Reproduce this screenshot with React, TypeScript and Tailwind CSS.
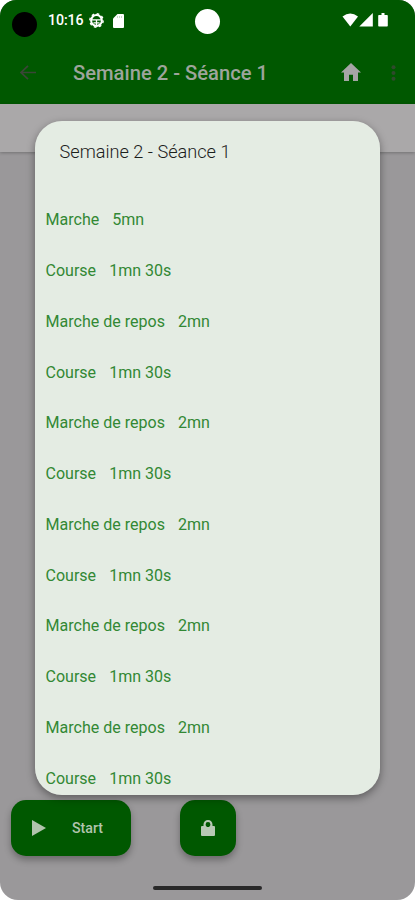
import React from "react";

type Step = { label: string; time: string };

const run: Step = { label: "Course", time: "1mn 30s" };
const rest: Step = { label: "Marche de repos", time: "2mn" };
const steps: Step[] = [
  { label: "Marche", time: "5mn" },
  run, rest, run, rest, run, rest, run, rest, run, rest, run,
];

function StatusBar() {
  return (
    <div className="relative flex h-[41px] items-center text-white">
      <span className="ml-3 mt-[7px] size-[25px] rounded-full bg-black" />
      <span className="ml-[11px] mt-px w-[36px] whitespace-nowrap text-[14.2px] font-medium tracking-[-0.1px]">10:16</span>
      <svg className="ml-[5px] size-[15px]" viewBox="0 0 15 15" fill="none" stroke="white">
        <circle cx="7.5" cy="7.5" r="5.4" strokeWidth="2" />
        <circle cx="7.5" cy="7.5" r="6.7" strokeWidth="1.4" strokeDasharray="2.63 2.63" />
        <path d="M2.500 6.800h10M7.500 7v5M4.500 9.800h6" strokeWidth="1.3" />
      </svg>
      <svg className="ml-[9px] h-[14px] w-[11px]" viewBox="0 0 11 14">
        <path d="M4.500 0H10q1 0 1 1v12q0 1-1 1H1q-1 0-1-1V4.500z" fill="white" />
        <path d="M4.500 2v2M6.500 2v2M8.500 2v2" stroke="#b9cfb9" strokeWidth=".8" />
      </svg>
      <span className="absolute left-[195px] top-[9px] size-[25px] rounded-full bg-white" />
      <svg className="absolute left-[342px] top-[13px] h-[14px] w-[46px]" viewBox="0 0 46 14" fill="white">
        <path d="M.5 3.500Q8.300-2.500 16 3.500L8.300 13.500z" />
        <path d="M30.800 0v13.500H17.300z" />
        <path d="M37 2h2.500V0h3v2H45q.8 0 .8.800v10q0 .8-.8.800h-8q-.8 0-.8-.8v-10q0-.8.800-.8z" />
      </svg>
    </div>
  );
}

function AppBar() {
  return (
    <div className="flex h-[63px] items-center">
      <svg className="ml-5 h-[15px] w-4" viewBox="0 0 16 16" preserveAspectRatio="none" fill="none" stroke="#3a4637" strokeWidth="1.800">
        <path d="M16 8H1.500M8 1L1 8l7 7" />
      </svg>
      <span className="ml-[37px] mt-[2px] w-[195px] whitespace-nowrap text-[20.200px] font-medium text-[#9da59b]">
        Semaine 2 - Séance 1
      </span>
      <svg className="ml-[73px] mt-[-1px] h-[18px] w-[20px]" viewBox="2 3 20 17" fill="#a5a5a5" preserveAspectRatio="none">
        <path d="M10 20v-6h4v6h5v-8h3L12 3 2 12h3v8z" />
      </svg>
      <svg className="ml-[29.500px] h-4 w-[5px]" viewBox="0 0 5 16" fill="#2f4a2c">
        <circle cx="2.500" cy="2.200" r="2" />
        <circle cx="2.500" cy="8" r="2" />
        <circle cx="2.500" cy="13.800" r="2" />
      </svg>
    </div>
  );
}

export default function App() {
  return (
    <div className="h-[900px] w-[415px] bg-white font-['Roboto',sans-serif]">
      <div className="relative flex h-full flex-col overflow-hidden rounded-t-[16px] rounded-b-[18px] bg-[#9a989a]">
        <header className="h-[104px] shrink-0 bg-[#005800]">
          <StatusBar />
          <AppBar />
        </header>
        <div className="h-[48px] shrink-0 bg-[#aaa8a9] shadow-[0_1px_3px_rgba(0,0,0,0.25)]" />

        <footer className="mt-auto flex h-[100px] items-start pl-[11px]">
          <button className="flex h-[56px] w-[120px] items-center rounded-[15px] bg-[#005800] shadow-[0_4px_7px_rgba(0,0,0,0.3)]">
            <svg className="ml-[21px] h-[16px] w-[14px]" viewBox="0 0 14 16" fill="#b1c4ad">
              <path d="M0 0l14 8-14 8z" />
            </svg>
            <span className="ml-[26px] mt-[2px] text-[14.200px] font-medium text-[#b1c4ad]">Start</span>
          </button>
          <button className="ml-[49px] flex size-[56px] items-center justify-center rounded-[15px] bg-[#005800] shadow-[0_4px_7px_rgba(0,0,0,0.3)]">
            <svg className="h-[16px] w-[14px]" viewBox="0 0 14 16" fill="#b8c9b5" fillRule="evenodd">
              <path d="M2.500 6V4.500a4.500 4.500 0 0 1 9 0V6H13q1 0 1 1v8q0 1-1 1H1q-1 0-1-1V7q0-1 1-1zM7 2a2.400 2.400 0 0 0-2.400 2.400c0 1.300 1 2.600 2.400 2.600s2.400-1.300 2.400-2.600A2.400 2.400 0 0 0 7 2z" />
            </svg>
          </button>
        </footer>

        <div className="absolute left-[35px] top-[121px] h-[674px] w-[345px] rounded-[27px] shadow-[0_3px_8px_rgba(0,0,0,0.4)]">
          <section className="h-full overflow-hidden rounded-[27px] bg-[#e4ece3]">
            <h1 className="ml-[24.500px] mt-[19px] h-[55px] whitespace-nowrap text-[18.150px] font-light leading-[24px] text-[#1b201b]">
              Semaine 2 - Séance 1
            </h1>
            <ul>
              {steps.map((step, i) => (
                <li key={i} className="flex h-[50.770px] items-center gap-[13px] whitespace-nowrap pl-[10.500px] text-[16.050px] text-[#328834]">
                  <span>{step.label}</span>
                  <span>{step.time}</span>
                </li>
              ))}
            </ul>
          </section>
        </div>
        <span className="absolute left-[153px] top-[886px] h-[4px] w-[109px] rounded-full bg-[#292929]" />
      </div>
    </div>
  );
}
